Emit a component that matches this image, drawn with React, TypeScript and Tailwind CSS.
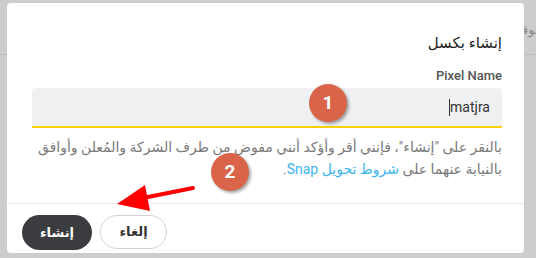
export default function App() {
  return (
    <div
      className="relative h-[258px] w-[536px] overflow-hidden bg-[#cdcdcd]"
      style={{ fontFamily: "Roboto, 'DejaVu Sans', sans-serif" }}
    >
      {/* page behind the dialog */}
      <div className="absolute inset-0">
        <div className="absolute left-0 right-0 top-[54px] h-px bg-[#bdbdbd]" />
        <div className="absolute right-[-6px] top-[20px] text-[13px] text-[#8a8a8a]" dir="rtl">
          موقع
        </div>
      </div>

      <div className="relative pl-[7px] pt-[3px]">
        <div dir="rtl" className="flex h-[250px] w-[517px] flex-col rounded-[4px] bg-white">
          <div className="pl-[25px] pr-[22px]">
            <h2 className="mt-[29px] text-[15px] font-normal leading-[22px] text-[#222]">إنشاء بكسل</h2>
            <label className="mt-[13px] block text-[13px] font-medium leading-[18px] text-[#555]">
              Pixel Name
            </label>
            <div className="mt-[3px] flex h-[40px] items-center rounded-t-[4px] border-b-2 border-[#f7d200] bg-[#eff0f2] pr-[12px]">
              <span className="text-[14px] text-[#333]">matjra</span>
              <span className="h-[17px] w-px bg-[#333]" />
            </div>
            <p className="mt-[8px] whitespace-nowrap text-[14px] leading-[22px] text-[#7a7a7a]">
              بالنقر على "إنشاء"، فإنني أقر وأؤكد أنني مفوض من طرف الشركة والمُعلن وأوافق
              <br />
              بالنيابة عنهما على <span className="text-[#3cb4f3]">شروط تحويل Snap</span>.
            </p>
          </div>
          <div className="mt-auto border-t border-[#ececec]" />
          <div className="flex justify-end gap-[8px] pb-[3px] pl-[15px] pt-[11px]">
            <button className="h-[34px] w-[67px] rounded-full border border-[#d4d4d4] bg-white text-[13px] font-semibold text-[#333]">
              إلغاء
            </button>
            <button className="h-[35px] w-[70px] rounded-full bg-[#3a3c3f] text-[13px] font-semibold text-white">
              إنشاء
            </button>
          </div>
        </div>
      </div>

      {/* annotations */}
      <div className="absolute left-[309px] top-[84px] flex h-[38px] w-[38px] items-center justify-center rounded-full bg-[#d9644a] text-[19px] font-bold text-white shadow-[2px_2px_3px_rgba(0,0,0,0.35)]">
        1
      </div>
      <div className="absolute left-[211px] top-[153px] flex h-[38px] w-[38px] items-center justify-center rounded-full bg-[#d9644a] text-[19px] font-bold text-white shadow-[2px_2px_3px_rgba(0,0,0,0.35)]">
        2
      </div>
      <svg className="absolute left-0 top-0" width="536" height="258" viewBox="0 0 536 258">
        <line x1="193" y1="188" x2="138" y2="199" stroke="#ff0000" strokeWidth="4" strokeLinecap="round" />
        <polygon points="117,204 145,185 150,211" fill="#ff0000" />
      </svg>
    </div>
  );
}
